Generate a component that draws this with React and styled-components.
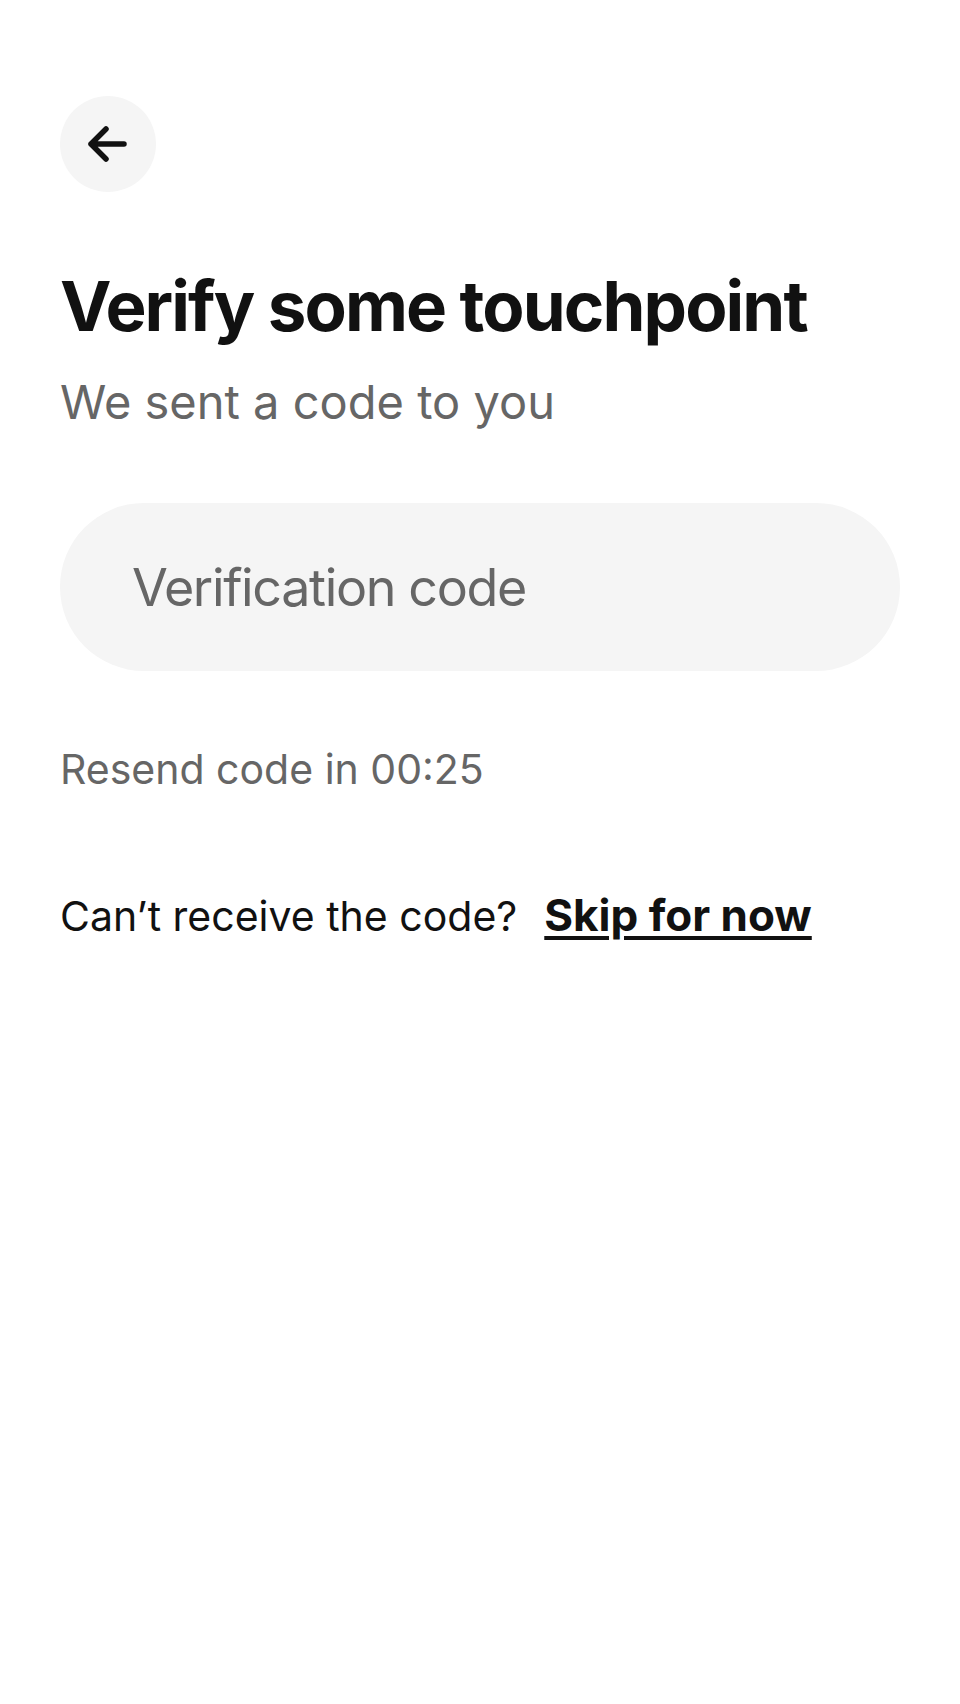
import React from "react";
import styled, { createGlobalStyle } from "styled-components";

const GlobalStyle = createGlobalStyle`
  html, body {
    margin: 0;
    padding: 0;
    background: #ffffff;
  }
  body {
    font-family: Inter, "Noto Sans", "Liberation Sans", sans-serif;
    color: #111111;
    -webkit-font-smoothing: antialiased;
  }
  * { box-sizing: border-box; }
`;

const Page = styled.main`
  min-height: 1704px;
  padding: 96px 60px 0;
  display: flex;
  flex-direction: column;
  align-items: flex-start;
`;

const BackButton = styled.button`
  width: 96px;
  height: 96px;
  border-radius: 50%;
  border: none;
  background: #f5f5f5;
  display: flex;
  align-items: center;
  justify-content: center;
  padding: 0;
  cursor: pointer;
  color: #111111;
`;

const Title = styled.h1`
  margin: 72px 0 0;
  font-size: 69px;
  line-height: 84px;
  font-weight: 700;
  letter-spacing: -1.9px;
  color: #111111;
`;

const Subtitle = styled.p`
  margin: 24px 0 0;
  font-size: 47px;
  line-height: 60px;
  font-weight: 400;
  color: #666666;
`;

const CodeInput = styled.input`
  margin-top: 71px;
  width: 100%;
  height: 168px;
  border: none;
  outline: none;
  border-radius: 84px;
  background: #f5f5f5;
  padding: 0 72px;
  font-family: inherit;
  font-size: 52px;
  letter-spacing: -1.35px;
  color: #111111;
  &::placeholder {
    color: #666666;
    opacity: 1;
  }
`;

const Resend = styled.p`
  margin: 70px 0 0;
  font-size: 41px;
  line-height: 57px;
  color: #666666;
`;

const HelpRow = styled.div`
  margin-top: 89px;
  display: flex;
  align-items: baseline;
  gap: 27px;
  font-size: 41px;
  line-height: 57px;
  color: #111111;
`;

const SkipLink = styled.a`
  font-size: 44px;
  font-weight: 700;
  color: #111111;
  text-decoration: underline;
  text-decoration-thickness: 4px;
  text-underline-offset: 5px;
  text-decoration-skip-ink: auto;
  cursor: pointer;
`;

const ArrowIcon = () => (
  <svg width="48" height="48" viewBox="0 0 48 48" fill="none" aria-hidden="true">
    <path
      d="M40 24H7M22 9L7 24L22 39"
      stroke="currentColor"
      strokeWidth="5.5"
      strokeLinecap="round"
      strokeLinejoin="round"
    />
  </svg>
);

export default function App() {
  return (
    <>
      <GlobalStyle />
      <Page>
        <BackButton aria-label="Back">
          <ArrowIcon />
        </BackButton>
        <Title>Verify some touchpoint</Title>
        <Subtitle>We sent a code to you</Subtitle>
        <CodeInput type="text" placeholder="Verification code" />
        <Resend>Resend code in 00:25</Resend>
        <HelpRow>
          <span>Can’t receive the code?</span>
          <SkipLink>Skip for now</SkipLink>
        </HelpRow>
      </Page>
    </>
  );
}
